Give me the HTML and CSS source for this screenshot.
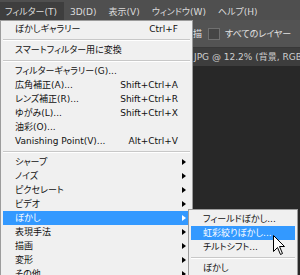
FILE: index.html
```html
<!DOCTYPE html>
<html lang="ja">
<head>
    <meta charset="UTF-8">
    <title>フィルター メニュー</title>
    <link rel="stylesheet" href="styles.css">
</head>
<body>

    <div class="menubar">
        <span class="menubar-item active">フィルター(T)</span>
        <span class="menubar-item">3D(D)</span>
        <span class="menubar-item">表示(V)</span>
        <span class="menubar-item">ウィンドウ(W)</span>
        <span class="menubar-item">ヘルプ(H)</span>
    </div>

    <div class="optbar">
        <span>描</span>
        <span class="checkbox"></span>
        <span>すべてのレイヤー</span>
    </div>

    <div class="tabbar">JPG @ 12.2% (背景, RGB/8#)</div>

    <div class="canvas"></div>

    <div class="menu">
        <div class="item"><span>ぼかしギャラリー</span><span class="key">Ctrl+F</span></div>
        <div class="sep"></div>
        <div class="item"><span>スマートフィルター用に変換</span></div>
        <div class="sep"></div>
        <div class="item"><span>フィルターギャラリー(G)...</span></div>
        <div class="item"><span>広角補正(A)...</span><span class="key">Shift+Ctrl+A</span></div>
        <div class="item"><span>レンズ補正(R)...</span><span class="key">Shift+Ctrl+R</span></div>
        <div class="item"><span>ゆがみ(L)...</span><span class="key">Shift+Ctrl+X</span></div>
        <div class="item"><span>油彩(O)...</span></div>
        <div class="item"><span>Vanishing Point(V)...</span><span class="key">Alt+Ctrl+V</span></div>
        <div class="sep"></div>
        <div class="item"><span>シャープ</span><span class="arrow"></span></div>
        <div class="item"><span>ノイズ</span><span class="arrow"></span></div>
        <div class="item"><span>ピクセレート</span><span class="arrow"></span></div>
        <div class="item"><span>ビデオ</span><span class="arrow"></span></div>
        <div class="item hover has-sub">
            <span>ぼかし</span><span class="arrow"></span>
            <div class="menu submenu">
                <div class="item"><span>フィールドぼかし...</span></div>
                <div class="item hover"><span>虹彩絞りぼかし...</span></div>
                <div class="item"><span>チルトシフト...</span></div>
                <div class="sep"></div>
                <div class="item"><span>ぼかし</span></div>
            </div>
        </div>
        <div class="item"><span>表現手法</span><span class="arrow"></span></div>
        <div class="item"><span>描画</span><span class="arrow"></span></div>
        <div class="item"><span>変形</span><span class="arrow"></span></div>
        <div class="item"><span>その他</span><span class="arrow"></span></div>
    </div>

    <svg class="cursor" width="13" height="21" viewBox="0 0 13 21">
        <path d="M0.5 0.5 L0.5 16.5 L4.5 12.5 L7.5 19.5 L9.5 18.5 L6.5 11.5 L11.5 11.5 Z" fill="#fff" stroke="#000" stroke-width="1"/>
    </svg>

</body>
</html>
```

FILE: styles.css
```css
body {
    margin: 0;
    width: 300px;
    height: 275px;
    overflow: hidden;
    background: #282828;
    font-family: "DejaVu Sans", "Noto Sans CJK JP", sans-serif;
    font-size: 9px;
    font-feature-settings: "palt";
    position: relative;
}
.menubar {
    height: 20px;
    box-sizing: border-box;
    padding-top: 2px;
    display: flex;
    background: #4f4f4f;
    color: #dcdcdc;
}
.menubar-item {
    padding: 3px 6px 0 6px;
    line-height: 14px;
}
.menubar-item.active {
    background: #3e3e3e;
    padding-left: 5px;
    padding-right: 7px;
}
.optbar {
    height: 28px;
    box-sizing: border-box;
    background: #535353;
    border-bottom: 1px solid #383838;
    color: #e2e2e2;
    display: flex;
    align-items: center;
    gap: 5px;
    padding-left: 193px;
}
.checkbox {
    width: 10px;
    height: 10px;
    background: #454545;
    border: 1px solid #707070;
    margin-left: 1px;
}
.tabbar {
    height: 18px;
    line-height: 18px;
    background: #3d3d3d;
    color: #cfcfcf;
    padding-left: 194px;
    white-space: nowrap;
    overflow: hidden;
}
.canvas {
    height: 209px;
    background: #282828;
}
.menu {
    position: absolute;
    top: 20px;
    left: 0;
    width: 193px;
    box-sizing: border-box;
    background: #f0f0f0;
    border: 1px solid #9c9c9c;
    padding: 1px 2px 2px 2px;
    color: #111;
}
.item {
    height: 14px;
    line-height: 14px;
    display: flex;
    align-items: center;
    padding: 0 12px;
    position: relative;
    white-space: nowrap;
}
.item .key {
    margin-left: auto;
}
.item .arrow {
    margin-left: auto;
    margin-right: -8px;
    width: 0;
    height: 0;
    border-left: 4px solid #000;
    border-top: 3.5px solid transparent;
    border-bottom: 3.5px solid transparent;
}
.item.hover {
    background: #3399ff;
    color: #fff;
}
.item.hover > .arrow {
    border-left-color: #fff;
}
.item.has-sub {
    color: #fff;
}
.sep {
    height: 7px;
    box-sizing: border-box;
    padding-top: 3px;
}
.sep::before {
    content: "";
    display: block;
    height: 1px;
    background: #c8c8c8;
    border-bottom: 1px solid #fff;
}
.submenu {
    top: -2px;
    left: 185px;
    width: 110px;
    padding-top: 2px;
    color: #111;
}
.cursor {
    position: absolute;
    left: 273px;
    top: 235px;
}
```
